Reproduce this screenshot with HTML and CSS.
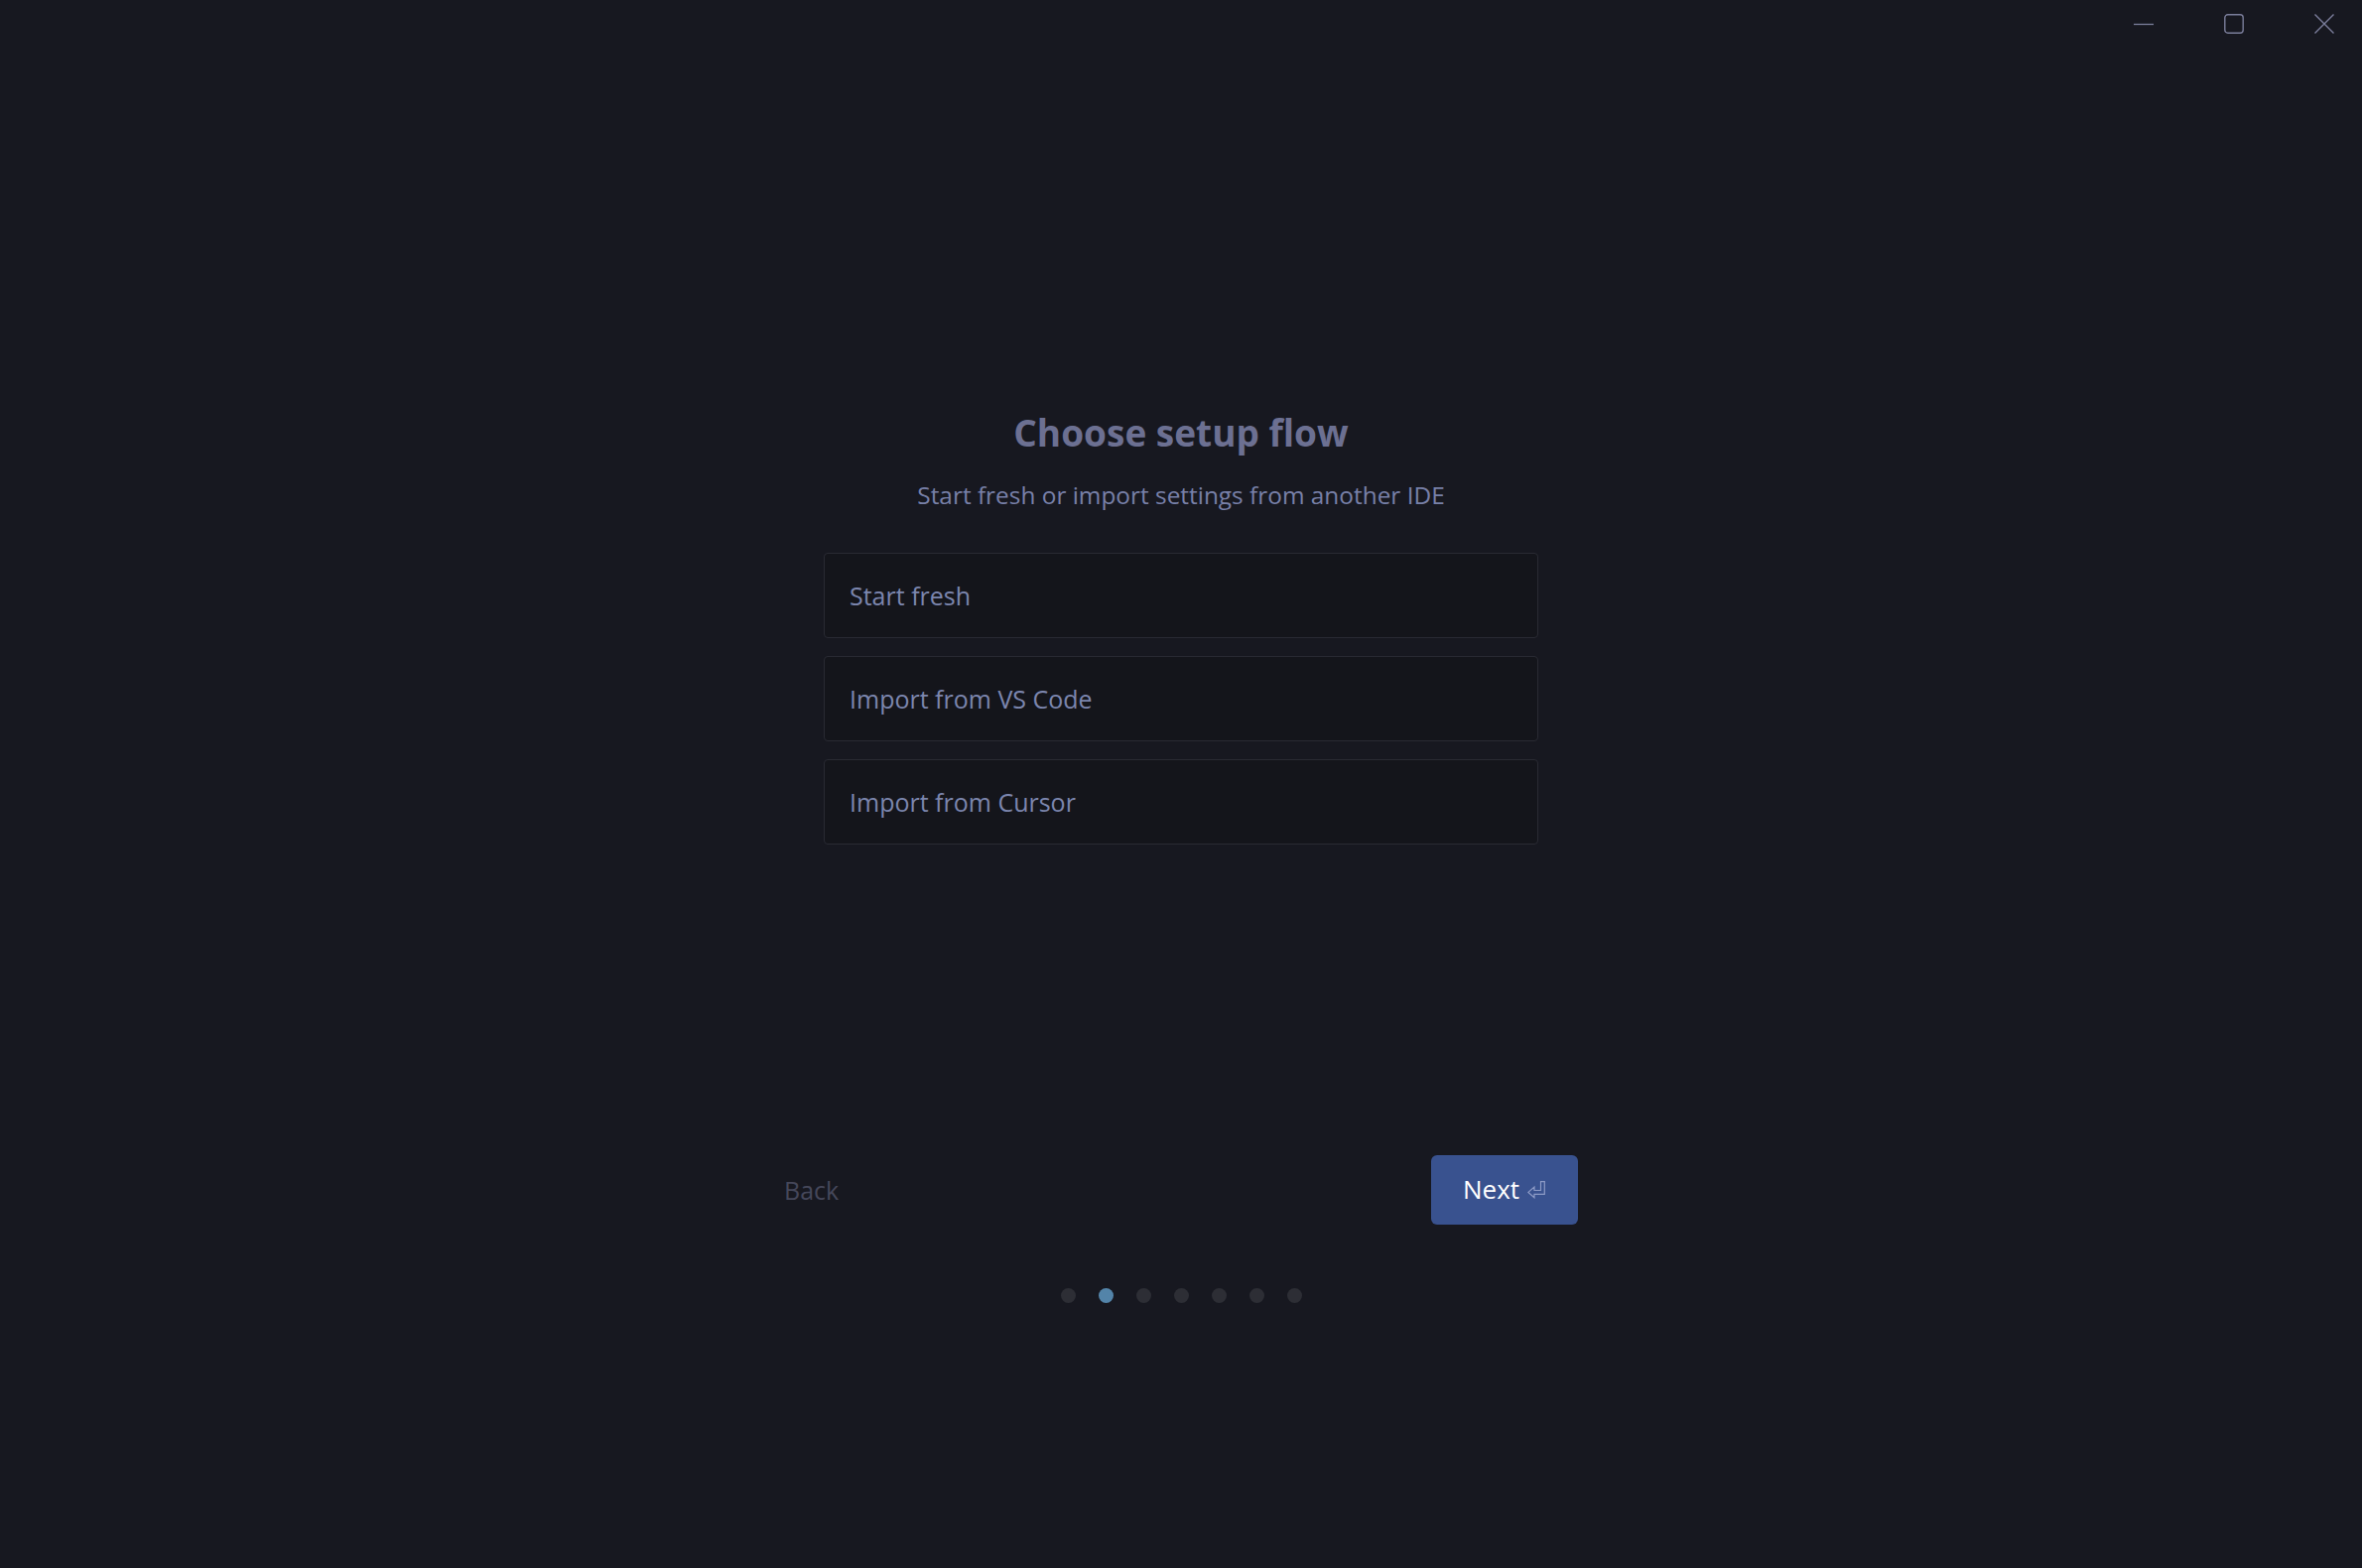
FILE: index.html
```html
<!DOCTYPE html>
<html lang="en">
<head>
<meta charset="utf-8">
<title>Choose setup flow</title>
<link rel="stylesheet" href="styles.css">
</head>
<body>
<div class="app">
  <header class="titlebar">
    <button class="caption" aria-label="Minimize">
      <svg width="20" height="20" viewBox="0 0 20 20"><line x1="0" y1="10.5" x2="20" y2="10.5" stroke="#7b7e9b" stroke-width="1.3"/></svg>
    </button>
    <button class="caption" aria-label="Maximize">
      <svg width="20" height="20" viewBox="0 0 20 20"><rect x="0.8" y="0.8" width="18.4" height="18.4" rx="3" fill="none" stroke="#7b7e9b" stroke-width="1.4"/></svg>
    </button>
    <button class="caption" aria-label="Close">
      <svg width="20" height="20" viewBox="0 0 20 20"><path d="M0.5 0.5 L19.5 19.5 M19.5 0.5 L0.5 19.5" stroke="#7b7e9b" stroke-width="1.4"/></svg>
    </button>
  </header>

  <main class="wizard">
    <h1 class="title">Choose setup flow</h1>
    <p class="subtitle">Start fresh or import settings from another IDE</p>

    <div class="options">
      <div class="option">Start fresh</div>
      <div class="option">Import from VS Code</div>
      <div class="option">Import from Cursor</div>
    </div>

    <div class="footer">
      <button class="back">Back</button>
      <button class="next">Next
        <svg class="enter" width="19" height="18" viewBox="0 0 19 18"><path d="M13.5 0.7 H17.3 V13.3 H7 V16.8 L0.9 11.4 L7 6 V9.5 H13.5 Z" fill="none" stroke="#8d9bc6" stroke-width="1.2"/></svg>
      </button>
    </div>

    <div class="dots">
      <span class="dot"></span>
      <span class="dot active"></span>
      <span class="dot"></span>
      <span class="dot"></span>
      <span class="dot"></span>
      <span class="dot"></span>
      <span class="dot"></span>
    </div>
  </main>
</div>
</body>
</html>
```

FILE: styles.css
```css
* { box-sizing: border-box; }

html, body {
  margin: 0;
  padding: 0;
  background: #171820;
}

body {
  font-family: "Open Sans", "Noto Sans", "Liberation Sans", sans-serif;
  color: #7c86ae;
}

.app {
  width: 2380px;
  height: 1580px;
  display: flex;
  flex-direction: column;
}

.titlebar {
  display: flex;
  justify-content: flex-end;
  gap: 71px;
  padding: 14px 28px 0 0;
  height: 48px;
}

.caption {
  width: 20px;
  height: 20px;
  padding: 0;
  border: 0;
  background: transparent;
  display: flex;
}

.wizard {
  display: flex;
  flex-direction: column;
  align-items: center;
  padding-top: 366px;
}

.title {
  margin: 0;
  font-size: 37px;
  line-height: 44px;
  font-weight: 700;
  color: #6c7092;
}

.subtitle {
  margin: 25px 0 0;
  font-size: 24.4px;
  line-height: 32px;
  color: #7880a8;
}

.options {
  margin-top: 42px;
  width: 720px;
  display: flex;
  flex-direction: column;
  gap: 18px;
}

.option {
  height: 86px;
  border: 1.5px solid #292a33;
  border-radius: 4px;
  background: #14151b;
  display: flex;
  align-items: center;
  padding-left: 25px;
  font-size: 25px;
  color: #7c86ae;
}

.footer {
  margin-top: 313px;
  width: 800px;
  display: flex;
  justify-content: space-between;
  align-items: center;
}

.back {
  border: 0;
  background: transparent;
  padding: 0;
  font-family: inherit;
  font-size: 25px;
  color: #45475a;
}

.next {
  width: 148px;
  height: 70px;
  border: 0;
  border-radius: 6px;
  background: #39528f;
  color: #ffffff;
  font-family: inherit;
  font-size: 26px;
  display: flex;
  align-items: center;
  justify-content: center;
  gap: 8px;
  padding: 0 0 2px;
}

.enter {
  margin-top: 2px;
}

.dots {
  margin-top: 64px;
  display: flex;
  gap: 23px;
}

.dot {
  width: 15px;
  height: 15px;
  border-radius: 50%;
  background: #2d2e35;
}

.dot.active {
  background: #5384a9;
}
```
